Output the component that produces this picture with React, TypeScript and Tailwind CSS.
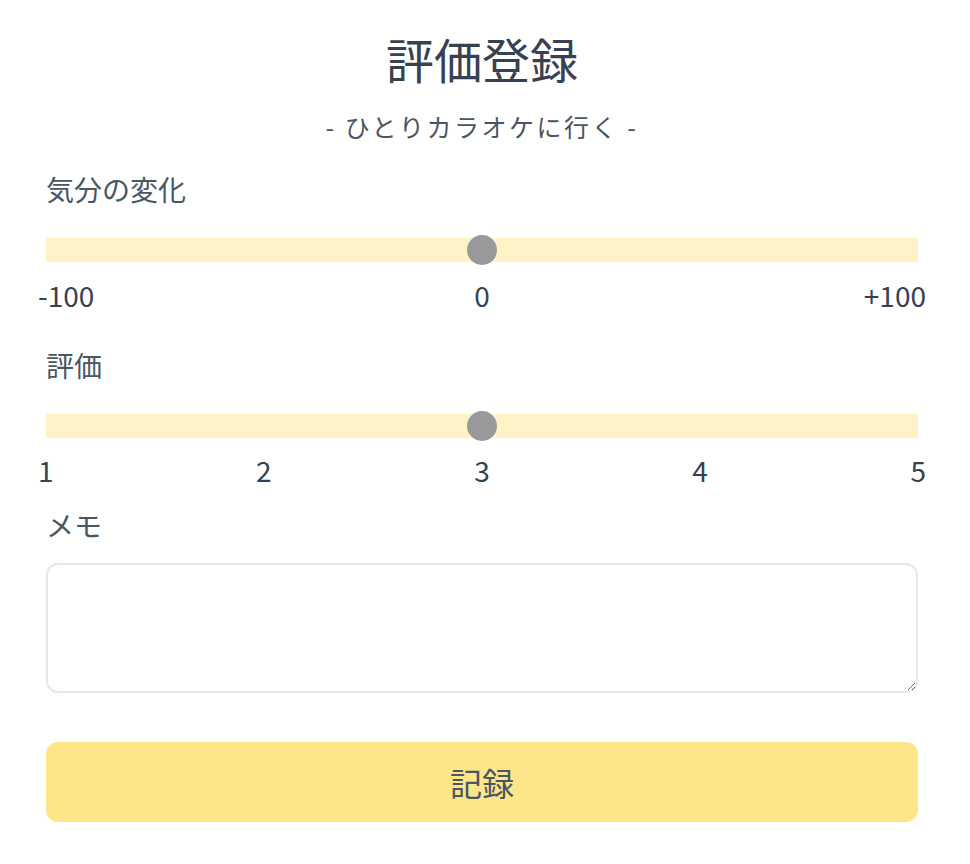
import React, { useState } from "react";

const font = { fontFamily: '"Noto Sans CJK JP", "Noto Sans", sans-serif' };

function Slider({ value, min, max }: { value: number; min: number; max: number }) {
  const pct = ((value - min) / (max - min)) * 100;
  return (
    <div className="relative h-[24px] w-full bg-[#fef3c7]">
      <div
        className="absolute top-1/2 h-[30px] w-[30px] -translate-x-1/2 -translate-y-1/2 rounded-full bg-[#999999]"
        style={{ left: `${pct}%` }}
      />
    </div>
  );
}

export default function App() {
  const [memo, setMemo] = useState("");

  return (
    <div className="min-h-screen bg-white pl-[46px] pr-[52px] pt-[34px] text-[#374151]" style={font}>
      <h1 className="text-center text-[48px] leading-[48px] font-normal">評価登録</h1>
      <p className="mt-[32px] text-center text-[25px] leading-[25px] tracking-[0.1em] text-[#4b5563]">
        - ひとりカラオケに行く -
      </p>

      <div className="mt-[36px] text-[28px] leading-[28px] text-[#4b5563]">気分の変化</div>
      <div className="mt-[35px]">
        <Slider value={0} min={-100} max={100} />
      </div>
      <div className="mx-[-8px] mt-[19px] grid grid-cols-3 text-[28px] leading-[28px]">
        <span className="text-left">-100</span>
        <span className="text-center">0</span>
        <span className="text-right">+100</span>
      </div>

      <div className="mt-[42px] text-[28px] leading-[28px] text-[#4b5563]">評価</div>
      <div className="mt-[35px]">
        <Slider value={3} min={1} max={5} />
      </div>
      <div className="mx-[-8px] mt-[18px] flex justify-between text-[28px] leading-[28px]">
        <span>1</span>
        <span>2</span>
        <span>3</span>
        <span>4</span>
        <span>5</span>
      </div>

      <div className="mt-[27px] text-[28px] leading-[28px] text-[#4b5563]">メモ</div>
      <textarea
        value={memo}
        onChange={(e) => setMemo(e.target.value)}
        className="mt-[24px] block h-[130px] w-full rounded-[12px] border-2 border-[#e5e7eb] bg-white p-3 text-[24px] outline-none"
      />

      <button className="mt-[49px] flex h-[80px] w-full items-center justify-center rounded-[12px] bg-[#fde68a] text-[32px] text-[#4b5563]">
        記録
      </button>
    </div>
  );
}
